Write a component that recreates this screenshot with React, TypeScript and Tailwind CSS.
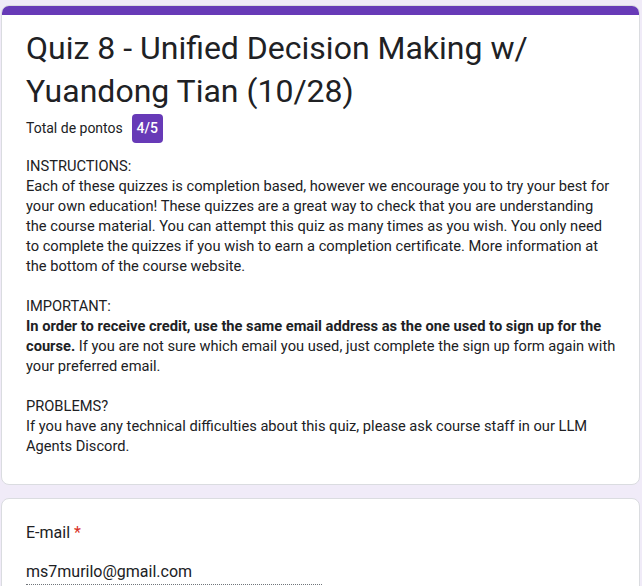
import React from 'react';

const font = { fontFamily: 'Roboto, "Liberation Sans", sans-serif' };

const Header = () => {
    return (
        <div className="rounded-lg bg-white border border-[#dadce0] overflow-hidden">
            <div className="h-[10px] bg-[#673ab7] -mx-px -mt-px"></div>
            <div className="px-6 pt-[12px] pb-[28px]">
                <h1 className="text-[32px] leading-[43px] text-[#202124] font-normal">
                    Quiz 8 - Unified Decision Making w/<br />Yuandong Tian (10/28)
                </h1>
                <div className="flex items-center mt-[1px] h-[29px]">
                    <span className="text-[14px] text-[#202124]">Total de pontos</span>
                    <span className="ml-[9px] h-[29px] w-[31px] justify-center flex items-center rounded-[4px] bg-[#673ab7] text-white text-[14px] font-medium">
                        4/5
                    </span>
                </div>
                <div className="mt-[13px] text-[14.67px] leading-[20px] text-[#202124] whitespace-nowrap">
                    <p>INSTRUCTIONS:</p>
                    <p>
                        Each of these quizzes is completion based, however we encourage you to try your best for<br />
                        your own education! These quizzes are a great way to check that you are understanding<br />
                        the course material. You can attempt this quiz as many times as you wish. You only need<br />
                        to complete the quizzes if you wish to earn a completion certificate. More information at<br />
                        the bottom of the course website.
                    </p>
                    <p className="h-[20px]"></p>
                    <p>IMPORTANT:</p>
                    <p>
                        <b className="font-bold">In order to receive credit, use the same email address as the one used to sign up for the</b><br />
                        <b className="font-bold">course.</b> If you are not sure which email you used, just complete the sign up form again with<br />
                        your preferred email.
                    </p>
                    <p className="h-[20px]"></p>
                    <p>PROBLEMS?</p>
                    <p>
                        If you have any technical difficulties about this quiz, please ask course staff in our LLM<br />
                        Agents Discord.
                    </p>
                </div>
            </div>
        </div>
    );
};

const EmailCard = () => {
    return (
        <div className="rounded-lg bg-white border border-[#dadce0] px-6 pt-[22px] pb-6">
            <div className="text-[16px] leading-[24px] text-[#202124]">
                E-mail <span className="text-[#d93025]">*</span>
            </div>
            <div className="mt-[15px] w-[296px] border-b border-dotted border-[#70757a]">
                <span className="text-[16px] leading-[22px] text-[#202124]">ms7murilo@gmail.com</span>
            </div>
        </div>
    );
};

export default function App() {
    return (
        <div className="min-h-screen bg-[#f0ebf8] pt-[5px] pl-[1px] pb-6" style={font}>
            <div className="w-[639px] flex flex-col gap-[13px]">
                <Header />
                <EmailCard />
            </div>
        </div>
    );
}
